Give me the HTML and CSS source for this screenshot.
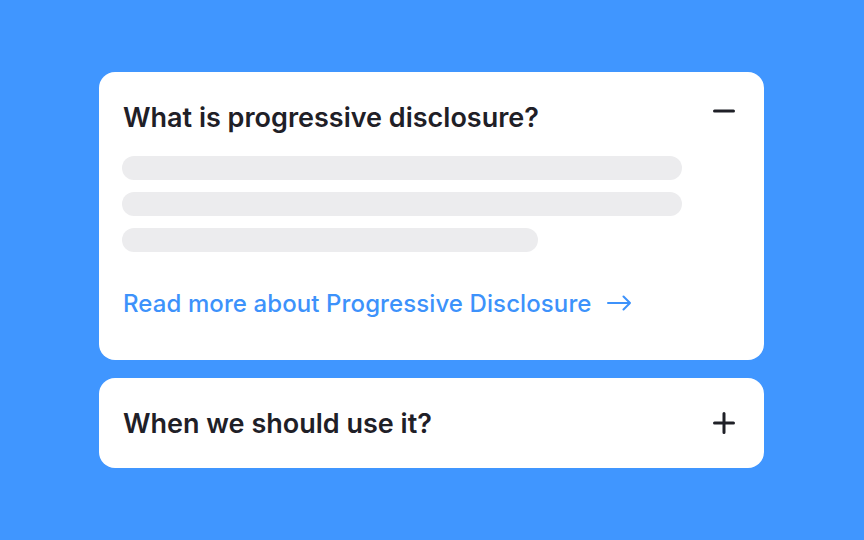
FILE: index.html
```html
<!DOCTYPE html>
<html>
<head>
  <link rel="stylesheet" href="styles.css">
</head>
<body>
  <div class="accordion">
    <div class="item open">
      <div class="item-header">
        <span class="question">What is progressive disclosure?</span>
        <svg class="toggle" width="24" height="24" viewBox="0 0 24 24">
          <path d="M2.5 12h19" />
        </svg>
      </div>
      <div class="placeholder">
        <div class="line"></div>
        <div class="line"></div>
        <div class="line short"></div>
      </div>
      <a class="read-more" href="#">
        Read more about Progressive Disclosure
        <svg width="24" height="24" viewBox="0 0 24 24">
          <path d="M1 12h22M16.5 5.5l6.5 6.5-6.5 6.5" />
        </svg>
      </a>
    </div>
    <div class="item">
      <div class="item-header">
        <span class="question">When we should use it?</span>
        <svg class="toggle" width="24" height="24" viewBox="0 0 24 24">
          <path d="M2.5 12h19M12 2.5v19" />
        </svg>
      </div>
    </div>
  </div>
</body>
</html>
```

FILE: styles.css
```css
body {
  margin: 0;
  background-color: #4096ff;
  font-family: Inter, "Noto Sans", sans-serif;
}

.accordion {
  width: 665px;
  margin: 72px 0 0 99px;
  display: flex;
  flex-direction: column;
  gap: 18px;
}

.item {
  background-color: #fff;
  border-radius: 16px;
  padding: 24px 28px 24px 23px;
}

.item.open {
  padding-bottom: 36px;
}

.item-header {
  height: 42px;
  padding-left: 1px;
  display: flex;
  align-items: center;
  justify-content: space-between;
}

.question {
  font-size: 27px;
  font-weight: 600;
  color: #1f2027;
}

.toggle {
  fill: none;
  stroke: #1f2027;
  stroke-width: 3;
  stroke-linecap: round;
}

.open .toggle {
  align-self: flex-start;
  margin-top: 3px;
}

.placeholder {
  margin-top: 18px;
  display: flex;
  flex-direction: column;
  gap: 12px;
}

.line {
  width: 560px;
  height: 24px;
  border-radius: 12px;
  background-color: #ececee;
}

.line.short {
  width: 416px;
}

.read-more {
  margin-top: 30px;
  padding-left: 1px;
  height: 42px;
  display: flex;
  align-items: center;
  gap: 15px;
  font-size: 24px;
  font-weight: 500;
  letter-spacing: 0.1px;
  color: #3d92fb;
  text-decoration: none;
}

.read-more svg {
  fill: none;
  stroke: #3d92fb;
  stroke-width: 2;
  stroke-linecap: round;
  stroke-linejoin: round;
}
```
